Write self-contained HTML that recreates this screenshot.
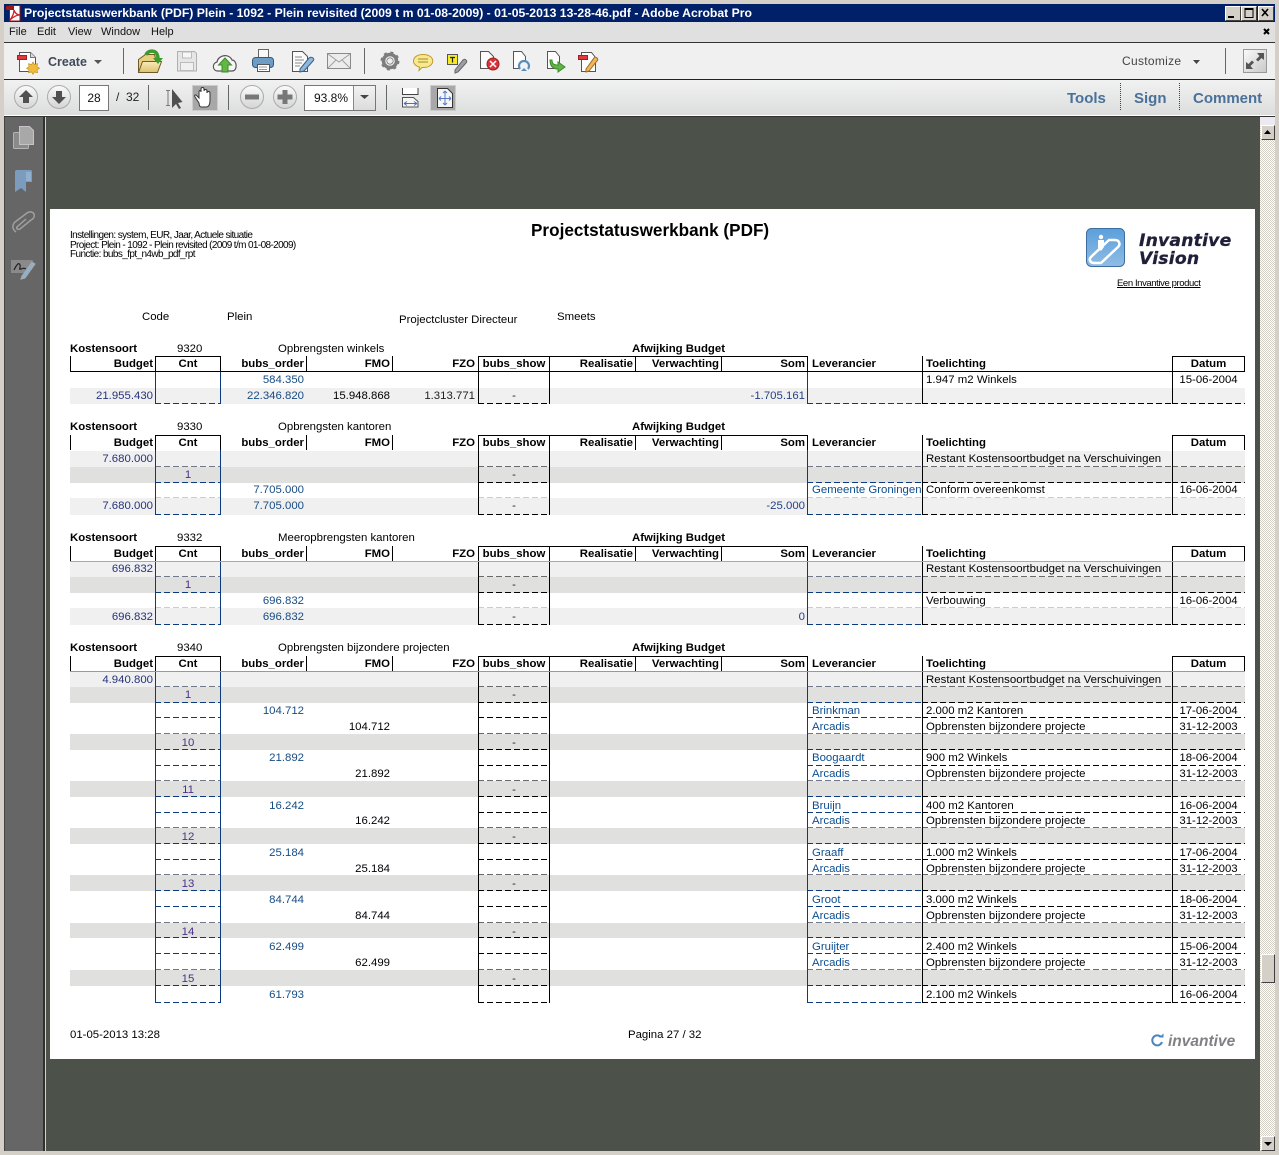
<!DOCTYPE html>
<html><head><meta charset="utf-8"><title>Projectstatuswerkbank</title>
<style>
html,body{margin:0;padding:0}
body{position:relative;width:1279px;height:1155px;overflow:hidden;background:#d4d0c8;font-family:"Liberation Sans",sans-serif;font-size:11.4px;color:#000}
div,span,b,svg,a{position:absolute}
.nw,div,span,b,a{white-space:nowrap}
#title{left:4px;top:4px;width:1271px;height:18px;background:#00206a}
#title span{left:20px;top:1px;color:#fff;font:bold 12.2px/16px "Liberation Sans",sans-serif}
.wb{top:6px;width:14px;height:13px;background:#d4d0c8;border:1px solid;border-color:#fff #404040 #404040 #fff}
#menu{left:4px;top:22px;width:1271px;height:20px;background:#e0e0e0}
#menu span{top:3px;font-size:11px;line-height:14px;color:#111}
#tb1{left:4px;top:42px;width:1271px;height:36px;background:#f0f0f1;border-top:1px solid #333;border-bottom:1px solid #222}
#tb2{left:4px;top:80px;width:1271px;height:35px;background:linear-gradient(#f1f1f2,#dcdedc);border-bottom:1px solid #fff}
#line{left:4px;top:116px;width:1271px;height:1px;background:#333}
.sep{width:1px;background:#666}
.box{background:#fff;border:1px solid #777;box-sizing:border-box;text-align:center;font-size:12px;color:#111}
.tab{top:90px;font:bold 15px/18px "Liberation Sans",sans-serif;color:#4a7199}
.dot{top:83px;height:27px;width:0;border-left:1px dotted #444}
#pane{left:4px;top:117px;width:41px;height:1034px;background:#666;border-right:2px solid #303030;box-sizing:border-box;border-left:1px solid #444}
#main{left:46px;top:117px;width:1214px;height:1034px;background:#4c5149}
#page{left:50px;top:209px;width:1205px;height:850px;background:#fff}
#sb{left:1260px;top:117px;width:15px;height:1034px;background:repeating-conic-gradient(#d4d0c8 0 25%,#fff 0 50%) 0 0/2px 2px}
.sbb{left:1px;width:12px;height:13px;background:#d4d0c8;border:1px solid;border-color:#fff #404040 #404040 #fff}
#bot{left:0;top:1151px;width:1279px;height:4px;background:#d4d0c8}
.t{line-height:14px;margin-top:1px}
.r{left:70px;width:1175px}
.L{background:#f0f0f1}.D{background:#e0e1df}
.r:after{content:"";position:absolute;left:0;right:0;bottom:0;height:1px;background:
repeating-linear-gradient(90deg,var(--a) 0 6px,transparent 6px 9px) 85px 0/66px 1px no-repeat,
repeating-linear-gradient(90deg,var(--b) 0 6px,transparent 6px 9px) 408px 0/72px 1px no-repeat,
repeating-linear-gradient(90deg,var(--a) 0 6px,transparent 6px 9px) 737px 0/115px 1px no-repeat,
repeating-linear-gradient(90deg,var(--b) 0 6px,transparent 6px 9px) 852px 0/250px 1px no-repeat,
repeating-linear-gradient(90deg,var(--b) 0 6px,transparent 6px 9px) 1102px 0/73px 1px no-repeat}
.k{--a:#0b3a7e;--b:#000}
.g{--a:#70788a;--b:#6a6a6a}
.h{--a:#ccc;--b:#ccc}
.n0{--a:transparent;--b:transparent}
.r span{top:1px;line-height:inherit}
.r .b{left:0;width:83px;text-align:right;color:#26337a}
.r .c{left:85px;width:66px;text-align:center;color:#4a3088}
.r .o{left:150px;width:84px;text-align:right;color:#164c84}
.r .f{left:240px;width:80px;text-align:right;color:#000}
.r .z{left:325px;width:80px;text-align:right;color:#222}
.r .s{left:408px;width:72px;text-align:center;color:#222}
.r .m{left:600px;width:135px;text-align:right;color:#243f84}
.r .l{left:742px;color:#0c4e90}
.r .n{left:856px;color:#000;letter-spacing:.02px}
.r .d{left:1102px;width:73px;text-align:center;color:#000}
.hd{left:70px;width:1175px;height:15px;line-height:15px;font-weight:bold}
.hd span{top:1px}
.hd .b{left:0;width:83px;text-align:right}.hd .c{left:85px;width:66px;text-align:center}
.hd .o{left:150px;width:84px;text-align:right}.hd .f{left:240px;width:80px;text-align:right}
.hd .z{left:325px;width:80px;text-align:right}.hd .s{left:408px;width:72px;text-align:center}
.hd .p{left:480px;width:83px;text-align:right}.hd .v{left:570px;width:79px;text-align:right}
.hd .m{left:600px;width:135px;text-align:right}.hd .l{left:742px}.hd .n{left:856px}
.hd .d{left:1102px;width:73px;text-align:center}
.ti{left:70px;width:1175px;height:14px;line-height:14px}
.ti span{top:1px}
.sec{left:70px;width:1175px;background:
linear-gradient(#0b3a7e,#0b3a7e) 85px 0/1px 100% no-repeat,
linear-gradient(#0b3a7e,#0b3a7e) 150px 0/1px 100% no-repeat,
linear-gradient(#000,#000) 408px 0/1px 100% no-repeat,
linear-gradient(#000,#000) 479px 0/1px 100% no-repeat,
linear-gradient(#0b3a7e,#0b3a7e) 737px 0/1px 100% no-repeat,
linear-gradient(#000,#000) 852px 0/1px 100% no-repeat,
linear-gradient(#000,#000) 1102px 0/1px 100% no-repeat}
.hb{left:70px;width:1175px;height:15px;background:
linear-gradient(#000,#000) 0 0/1px 100% no-repeat,
linear-gradient(#000,#000) 85px 0/1px 100% no-repeat,
linear-gradient(#000,#000) 150px 0/1px 100% no-repeat,
linear-gradient(#000,#000) 236px 0/1px 100% no-repeat,
linear-gradient(#000,#000) 322px 0/1px 100% no-repeat,
linear-gradient(#000,#000) 565px 0/1px 100% no-repeat,
linear-gradient(#000,#000) 651px 0/1px 100% no-repeat,
linear-gradient(#000,#000) 737px 0/1px 100% no-repeat,
linear-gradient(#000,#000) 1174px 0/1px 100% no-repeat,
linear-gradient(#000,#000) 85px 0/66px 1px no-repeat,
linear-gradient(#000,#000) 408px 0/329px 1px no-repeat,
linear-gradient(#000,#000) 1102px 0/73px 1px no-repeat}
.ln{left:70px;width:1175px;height:1px}
</style></head><body>
<div id="title"><span>Projectstatuswerkbank (PDF) Plein - 1092 - Plein revisited (2009 t m 01-08-2009) - 01-05-2013 13-28-46.pdf - Adobe Acrobat Pro</span></div>
<div class="wb" style="left:1225px"></div><div class="wb" style="left:1241px"></div><div class="wb" style="left:1258px"></div>
<div id="menu"><span style="left:5px">File</span><span style="left:33px">Edit</span><span style="left:64px">View</span><span style="left:97px">Window</span><span style="left:147px">Help</span></div>
<div id="tb1"></div><div id="tb2"></div><div id="line"></div>
<span style="left:48px;top:54px;font:bold 12.5px/16px 'Liberation Sans',sans-serif;color:#3f4a5a">Create</span>
<span style="left:1122px;top:54px;font-size:12px;line-height:15px;color:#444;letter-spacing:.3px">Customize</span>
<div class="sep" style="left:123px;top:48px;height:26px"></div>
<div class="sep" style="left:364px;top:48px;height:26px"></div>
<div class="sep" style="left:1225px;top:48px;height:26px"></div>
<div class="sep" style="left:148px;top:85px;height:25px"></div>
<div class="sep" style="left:228px;top:85px;height:25px"></div>
<div class="sep" style="left:386px;top:85px;height:25px"></div>
<div class="box" style="left:79px;top:85px;width:30px;height:26px;line-height:25px">28</div>
<span style="left:116px;top:90px;font-size:12px;line-height:15px;color:#222">/&nbsp; 32</span>
<div class="box" style="left:304px;top:85px;width:72px;height:26px;line-height:25px;text-align:left;padding-left:9px">93.8%</div>
<div style="left:353px;top:86px;width:22px;height:24px;background:linear-gradient(#f2f2f2,#dcdcdc);border-left:1px solid #888;box-sizing:border-box"></div>
<div style="left:192px;top:85px;width:26px;height:26px;background:#a8a8a8;border:1px solid #ccc;box-sizing:border-box"></div>
<div style="left:430px;top:85px;width:26px;height:26px;background:#a8a8a8;border:1px solid #ccc;box-sizing:border-box"></div>
<span class="tab" style="left:1067px">Tools</span><div class="dot" style="left:1120px"></div>
<span class="tab" style="left:1134px">Sign</span><div class="dot" style="left:1179px"></div>
<span class="tab" style="left:1193px">Comment</span>
<div id="pane"></div><div id="main"></div><div id="sb"><div style="left:0;top:0;width:15px;height:8px;background:#ece9f0"></div><div class="sbb" style="top:8px"></div><div class="sbb" style="top:837px;height:27px"></div><div class="sbb" style="top:1019px"></div></div>
<div id="bot"></div>
<svg style="left:0;top:0" width="1279" height="1155" viewBox="0 0 1279 1155">
<defs><linearGradient id="gr" x2="1" y2="1"><stop offset="0" stop-color="#fafafa"/><stop offset="1" stop-color="#c8c8c8"/></linearGradient><linearGradient id="bl" x1="0" y1="0" x2="0" y2="1"><stop offset="0" stop-color="#5c9fdb"/><stop offset="1" stop-color="#8fbce4"/></linearGradient><linearGradient id="fo" x1="0" y1="0" x2="0" y2="1"><stop offset="0" stop-color="#f8ecb8"/><stop offset="1" stop-color="#dcc070"/></linearGradient><linearGradient id="cr" x1="0" y1="0" x2="0" y2="1"><stop offset="0" stop-color="#fbfbfb"/><stop offset="1" stop-color="#d4d4d4"/></linearGradient></defs>
<path d="M1228 16h6v2h-6z" fill="#000"/><path d="M1245 8.500h8v9h-8zM1245 9.500h8" fill="none" stroke="#000"/><path d="M1262 9l6 7M1268 9l-6 7" stroke="#000" stroke-width="1.600"/>
<path d="M1264 29l5 5M1269 29l-5 5" stroke="#000" stroke-width="2"/>
<!-- pdf icon -->
<path d="M9.500 5.500h10.500v15.500h-10.500z" fill="#fff" stroke="#8c1414"/><path d="M6 6h8v4h-8z" fill="#9c1a1a"/><path d="M10 20c3-4 4-7 4-10 1 3 3 5 6 5-4 0-7 2-10 5z" fill="none" stroke="#d0202a" stroke-width="1.300"/>
<!-- create -->
<path d="M19.500 52.500h11l5 5v14h-16z" fill="#fff" stroke="#555"/><path d="M30.500 52.500v5h5" fill="#ddd" stroke="#777"/><rect x="17.500" y="55.500" width="9" height="4" fill="#e0383c" stroke="#a02020"/><path d="M33 62l1.500 2.500 3-.800-.500 3 2.500 1.500-2.500 1.500.500 3-3-.800-1.500 2.500-1.500-2.500-3 .800.500-3-2.500-1.500 2.500-1.500-.500-3 3 .800z" fill="#f0bd3a" stroke="#b98a1c" stroke-width=".600"/>
<path d="M94 60h8l-4 4z" fill="#555"/>
<!-- open -->
<path d="M138.500 59.500l7-5h9l1 4v13h-17z" fill="#e8d080" stroke="#6d5c28"/><path d="M138.500 72.500l4-11h19l-4 11z" fill="url(#fo)" stroke="#6d5c28"/><path d="M146 55c2-5 9-5 11-1 1 2 1 3 1 5" fill="none" stroke="#3f9a2e" stroke-width="3.500"/><path d="M153 58h10l-5 6z" fill="#3f9a2e"/>
<!-- save -->
<path d="M177.500 51.500h17l2 2v17.500h-19z" fill="#e6e6e6" stroke="#b0b0b0"/><rect x="182.500" y="52" width="9" height="6" fill="#f6f6f6" stroke="#bbb"/><rect x="180.500" y="62.500" width="13" height="8" fill="#f0f0f0" stroke="#bbb"/>
<!-- cloud -->
<path d="M218 71c-6 0-6-8-1-9 1-7 12-9 15-2 5 0 6 11 0 11z" fill="#f6f6f6" stroke="#555" stroke-width="1.200"/><path d="M225 58l-6.500 7h3.500v7h6v-7h3.500z" fill="#62b745" stroke="#3c8a2c"/>
<!-- print -->
<rect x="258.500" y="49.500" width="10" height="8" fill="#f8f8f8" stroke="#666"/><rect x="252.500" y="57.500" width="21" height="10" rx="3" fill="#6d9cc4" stroke="#34587a"/><rect x="257.500" y="64.500" width="12" height="7" fill="#fff" stroke="#555"/><path d="M259 67h8M259 69.500h8" stroke="#999"/>
<!-- edit doc -->
<path d="M292.500 51.500h10l5 5v15h-15z" fill="#fbfbfb" stroke="#555"/><path d="M295 57h7M295 60h9M295 63h7M295 66h5" stroke="#888"/><path d="M300 69l9-11c1-1 3-1 4 0s1 2 0 3l-9 10-4 1z" fill="#8fb8dc" stroke="#3a5f85"/>
<!-- mail -->
<rect x="327.500" y="53.500" width="23" height="15" fill="#ececec" stroke="#8a8a8a"/><path d="M328 54l11 8 11-8M328 68l8-8M350 68l-8-8" fill="none" stroke="#a0a0a0"/>
<!-- gear -->
<circle cx="390" cy="61" r="6.500" fill="none" stroke="#7d7d7d" stroke-width="3.500"/><circle cx="390" cy="61" r="8.500" fill="none" stroke="#7d7d7d" stroke-width="2" stroke-dasharray="3 3.700"/><circle cx="390" cy="61" r="3.200" fill="#eee" stroke="#555" stroke-width=".600"/>
<!-- comment -->
<path d="M423 54.500c13 0 13 13 0 13h-1l-3 3 .500-3.500c-9-2-8-12.500 3.500-12.500z" fill="#f8e98c" stroke="#c09a30"/><path d="M418 59h10M418 62h10" stroke="#a08a30"/>
<!-- note -->
<rect x="447.500" y="54.500" width="10" height="10" fill="#f6ea20" stroke="#555"/><path d="M450 57.500h5M452.500 57.500v5" stroke="#222" stroke-width="1.200"/><path d="M455 70l8-10c1-1 2-1 3 0s1 2 0 3l-8 9-3 1z" fill="#9a9ea4" stroke="#666"/>
<!-- doc x -->
<path d="M480.500 51.500h8l5 5v12h-13z" fill="#fdfdfd" stroke="#555"/><circle cx="493" cy="64" r="6" fill="#d8333a" stroke="#a02020"/><path d="M490 61l6 6M496 61l-6 6" stroke="#fff" stroke-width="1.500"/>
<!-- doc rotate -->
<path d="M513.500 51.500h8l4 5v12h-12z" fill="#fdfdfd" stroke="#555"/><path d="M520 69a5 5 0 1 1 8 0" fill="#eef3f8" stroke="#5c8db8" stroke-width="2.200"/><path d="M521 71h6l-3 -3z" fill="#5c8db8"/>
<!-- doc arrow -->
<path d="M547.500 51.500h8l4 5v12h-12z" fill="#fdfdfd" stroke="#555"/><path d="M552 60c0 4 2 5 6 5v-3l7 5-7 5v-3c-5 0-8-3-8-9z" fill="#63b247" stroke="#3c8a2c"/>
<!-- doc pencil -->
<path d="M581.500 52.500h10l4 5v14h-14z" fill="#fdfdfd" stroke="#555"/><rect x="578.500" y="55.500" width="9" height="4" fill="#e0383c" stroke="#a02020"/><path d="M586 69l8-11c1-1 2-1 3 0s1 2 0 3l-8 10-3 1z" fill="#f2b65a" stroke="#a06a20"/>
<!-- right -->
<path d="M1193 60h7l-3.500 4z" fill="#444"/>
<rect x="1243.500" y="49.500" width="23" height="23" fill="url(#gr)" stroke="#999"/>
<path d="M1257 53h7v7l-2.500-2-3.500 3.500-2-2 3.500-3.500zM1253 69h-7v-7l2.500 2 3.500-3.500 2 2-3.500 3.500z" fill="#555"/>
<!-- nav -->
<g stroke="#aaa" fill="url(#cr)"><circle cx="26" cy="97" r="11.500"/><circle cx="59" cy="97" r="11.500"/><circle cx="252" cy="97" r="11.500"/><circle cx="285" cy="97" r="11.500"/></g>
<path d="M26 90l-7 7h4v6h6v-6h4z" fill="#505050"/><path d="M59 104l-7-7h4v-6h6v6h4z" fill="#505050"/>
<rect x="245" y="94.500" width="14" height="5" fill="#777"/><path d="M282.500 90h5v4.500h5v5h-5v4.500h-5v-4.500h-5v-5h5z" fill="#777"/>
<path d="M360 95h9l-4.500 4z" fill="#444"/>
<!-- select -->
<path d="M166 90.500h4M166 105.500h4M168 90.500v15" stroke="#777" fill="none"/><path d="M172 89v19l4-4 3 5 2-1-3-5 4.500-1z" fill="#505050"/>
<!-- hand -->
<path d="M199 103l-4-6c-1-2 1-3 2-1l2 2v-6c0-2 2-2 2 0v-3c0-2 3-2 3 0v2c0-2 3-2 3 0v2c0-2 3-2 3 0v7c0 4-1 7-4 7h-5c-1 0-2-2-2-4z" fill="#fff" stroke="#333"/>
<!-- fit width -->
<path d="M402.500 88v6.500h15.500v-6.500" fill="#fff" stroke="#444"/><path d="M402.500 97.500h11l4.500 4v5.500h-15.500z" fill="#f6f6f6" stroke="#555"/><path d="M404 103.500h13M404 103.500l3-2M404 103.500l3 2M417 103.500l-3-2M417 103.500l-3 2" stroke="#4a6fc0"/>
<!-- fit page -->
<path d="M437.500 88.500h10l5 5v14h-15z" fill="#f6f6f6" stroke="#333"/><path d="M445 91v14M439 98.500h12M445 91l-2 2M445 91l2 2M445 105l-2-2M445 105l2-2M439 98.500l2-2M439 98.500l2 2M451 98.500l-2-2M451 98.500l-2 2" stroke="#5a78c8" fill="none"/>
<!-- scrollbar arrows -->
<path d="M1264 134h7l-3.500-4z" fill="#000"/><path d="M1264 1142h8l-4 4z" fill="#000"/>
<!-- pane -->
<rect x="13.500" y="132.500" width="15" height="16" rx="1" fill="#8a8a8a" stroke="#b4b4b4"/><path d="M19.500 126.500h10l4 4v14h-14z" fill="#a8a8a8" stroke="#c4c4c4"/>
<path d="M15 172c0-2 1-2 2-2h13c2 0 2 1 2 2v10h-6v10l-5-4-6 4z" fill="#7b9cbc"/><path d="M26 172h5v9h-5z" fill="#8fb0cf"/>
<path d="M16 232c-4-3-4-7-1-10l12-9c3-2 6-1 7 1 1 3-1 5-3 6l-11 9c-2 1-4 0-3-2l9-8" fill="none" stroke="#a0a0a0" stroke-width="1.500"/>
<path d="M11 260h22l-4 13H11z" fill="#8a8a8a"/><path d="M14 270c3-6 5-8 6-5s-2 5 1 4 3-1 5 0" fill="none" stroke="#222" stroke-width="1.200"/><path d="M22 276l10-14 3 2-10 14-4 1z" fill="#8db0d0" stroke="#aaa"/>
</svg>
<div id="page"></div>
<div class="nw" style="left:70px;top:231px;font-size:10px;line-height:10px;letter-spacing:-.6px">Instellingen: system, EUR, Jaar, Actuele situatie</div>
<div class="nw" style="left:70px;top:241px;font-size:10px;line-height:10px;letter-spacing:-.62px">Project: Plein - 1092 - Plein revisited (2009 t/m 01-08-2009)</div>
<div class="nw" style="left:70px;top:250px;font-size:10px;line-height:10px;letter-spacing:-.6px">Functie: bubs_fpt_n4wb_pdf_rpt</div>
<div class="nw" style="left:531px;top:221px;font:bold 17.15px/18px 'Liberation Sans',sans-serif">Projectstatuswerkbank (PDF)</div>
<svg style="left:1086px;top:228px" width="40" height="41" viewBox="0 0 40 41"><rect x=".5" y=".5" width="38" height="38" rx="5" fill="url(#bl)" stroke="#3c6fa0"/><path d="M5 29c-3 3 0 6 3 6h7L32 19c3-3 1-7-3-7h-6L7 27z" fill="none" stroke="#fff" stroke-width="2.500"/><circle cx="15" cy="9" r="2.200" fill="#fff"/><path d="M12 12h6v7l-3 4-3-3z" fill="#fff"/></svg>
<div class="nw" style="left:1139px;top:231px;font:italic bold 17.2px/20px 'DejaVu Sans',sans-serif;color:#1f1f38;letter-spacing:.2px;-webkit-text-stroke:.3px #1f1f38">Invantive</div>
<div class="nw" style="left:1139px;top:249px;font:italic bold 17.2px/20px 'DejaVu Sans',sans-serif;color:#1f1f38;letter-spacing:.2px;-webkit-text-stroke:.3px #1f1f38">Vision</div>
<div class="nw" style="left:1117px;top:279px;font-size:9.500px;line-height:10px;letter-spacing:-.4px;text-decoration:underline">Een Invantive product</div>
<div class="t" style="left:142px;top:309px">Code</div>
<div class="t" style="left:227px;top:309px">Plein</div>
<div class="t" style="left:399px;top:312px">Projectcluster Directeur</div>
<div class="t" style="left:557px;top:309px">Smeets</div>

<!-- 9320 -->
<div class="ti" style="top:341px"><span style="left:0;font-weight:bold">Kostensoort</span><span style="left:107px">9320</span><span style="left:208px">Opbrengsten winkels</span><span style="left:562px;font-weight:bold">Afwijking Budget</span></div>
<div class="r n0" style="top:372px;height:16px;line-height:15px"><span class="o">584.350</span><span class="n">1.947 m2 Winkels</span><span class="d">15-06-2004</span></div>
<div class="r L k" style="top:388px;height:16px;line-height:15px"><span class="b">21.955.430</span><span class="o">22.346.820</span><span class="f">15.948.868</span><span class="z">1.313.771</span><span class="s">-</span><span class="m">-1.705.161</span></div>
<div class="sec" style="top:356px;height:48px"></div>
<div class="hb" style="top:356px"></div><div class="ln" style="top:371px;background:#000"></div>
<div class="hd" style="top:356px"><span class="b">Budget</span><span class="c">Cnt</span><span class="o">bubs_order</span><span class="f">FMO</span><span class="z">FZO</span><span class="s">bubs_show</span><span class="p">Realisatie</span><span class="v">Verwachting</span><span class="m">Som</span><span class="l">Leverancier</span><span class="n">Toelichting</span><span class="d">Datum</span></div>

<!-- 9330 -->
<div class="ti" style="top:419px"><span style="left:0;font-weight:bold">Kostensoort</span><span style="left:107px">9330</span><span style="left:208px">Opbrengsten kantoren</span><span style="left:562px;font-weight:bold">Afwijking Budget</span></div>
<div class="r L g" style="top:451px;height:16px;line-height:15px"><span class="b">7.680.000</span><span class="n">Restant Kostensoortbudget na Verschuivingen</span></div>
<div class="r D k" style="top:467px;height:16px;line-height:15px"><span class="c">1</span><span class="s">-</span></div>
<div class="r h" style="top:483px;height:15px;line-height:13px"><span class="o">7.705.000</span><span class="l">Gemeente Groningen</span><span class="n">Conform overeenkomst</span><span class="d">16-06-2004</span></div>
<div class="r L k" style="top:498px;height:17px;line-height:15px"><span class="b">7.680.000</span><span class="o">7.705.000</span><span class="s">-</span><span class="m">-25.000</span></div>
<div class="sec" style="top:435px;height:80px"></div>
<div class="hb" style="top:435px"></div>
<div class="hd" style="top:435px"><span class="b">Budget</span><span class="c">Cnt</span><span class="o">bubs_order</span><span class="f">FMO</span><span class="z">FZO</span><span class="s">bubs_show</span><span class="p">Realisatie</span><span class="v">Verwachting</span><span class="m">Som</span><span class="l">Leverancier</span><span class="n">Toelichting</span><span class="d">Datum</span></div>

<!-- 9332 -->
<div class="ti" style="top:530px"><span style="left:0;font-weight:bold">Kostensoort</span><span style="left:107px">9332</span><span style="left:208px">Meeropbrengsten kantoren</span><span style="left:562px;font-weight:bold">Afwijking Budget</span></div>
<div class="r L g" style="top:561px;height:16px;line-height:15px"><span class="b">696.832</span><span class="n">Restant Kostensoortbudget na Verschuivingen</span></div>
<div class="r D k" style="top:577px;height:16px;line-height:15px"><span class="c">1</span><span class="s">-</span></div>
<div class="r h" style="top:593px;height:15px;line-height:14px"><span class="o">696.832</span><span class="n">Verbouwing</span><span class="d">16-06-2004</span></div>
<div class="r L k" style="top:608px;height:17px;line-height:16px"><span class="b">696.832</span><span class="o">696.832</span><span class="s">-</span><span class="m">0</span></div>
<div class="sec" style="top:546px;height:79px"></div>
<div class="hb" style="top:546px"></div><div class="ln" style="top:561px;background:#aaa"></div>
<div class="hd" style="top:546px"><span class="b">Budget</span><span class="c">Cnt</span><span class="o">bubs_order</span><span class="f">FMO</span><span class="z">FZO</span><span class="s">bubs_show</span><span class="p">Realisatie</span><span class="v">Verwachting</span><span class="m">Som</span><span class="l">Leverancier</span><span class="n">Toelichting</span><span class="d">Datum</span></div>

<!-- 9340 -->
<div class="ti" style="top:640px"><span style="left:0;font-weight:bold">Kostensoort</span><span style="left:107px">9340</span><span style="left:208px">Opbrengsten bijzondere projecten</span><span style="left:562px;font-weight:bold">Afwijking Budget</span></div>
<div class="r L g" style="top:672px;height:15px;line-height:15px"><span class="b">4.940.800</span><span class="n">Restant Kostensoortbudget na Verschuivingen</span></div>
<div class="r D k" style="top:687px;height:16px;line-height:15px"><span class="c">1</span><span class="s">-</span></div>
<div class="r k" style="top:703px;height:15px;line-height:15px"><span class="o">104.712</span><span class="l">Brinkman</span><span class="n">2.000 m2 Kantoren</span><span class="d">17-06-2004</span></div>
<div class="r g" style="top:718px;height:16px;line-height:16px"><span class="f">104.712</span><span class="l">Arcadis</span><span class="n">Opbrensten bijzondere projecte</span><span class="d">31-12-2003</span></div>
<div class="r D k" style="top:734px;height:16px;line-height:16px"><span class="c">10</span><span class="s">-</span></div>
<div class="r k" style="top:750px;height:16px;line-height:15px"><span class="o">21.892</span><span class="l">Boogaardt</span><span class="n">900 m2 Winkels</span><span class="d">18-06-2004</span></div>
<div class="r g" style="top:766px;height:15px;line-height:15px"><span class="f">21.892</span><span class="l">Arcadis</span><span class="n">Opbrensten bijzondere projecte</span><span class="d">31-12-2003</span></div>
<div class="r D k" style="top:781px;height:16px;line-height:16px"><span class="c">11</span><span class="s">-</span></div>
<div class="r k" style="top:797px;height:16px;line-height:16px"><span class="o">16.242</span><span class="l">Bruijn</span><span class="n">400 m2 Kantoren</span><span class="d">16-06-2004</span></div>
<div class="r g" style="top:813px;height:15px;line-height:15px"><span class="f">16.242</span><span class="l">Arcadis</span><span class="n">Opbrensten bijzondere projecte</span><span class="d">31-12-2003</span></div>
<div class="r D k" style="top:828px;height:16px;line-height:16px"><span class="c">12</span><span class="s">-</span></div>
<div class="r k" style="top:844px;height:16px;line-height:16px"><span class="o">25.184</span><span class="l">Graaff</span><span class="n">1.000 m2 Winkels</span><span class="d">17-06-2004</span></div>
<div class="r g" style="top:860px;height:15px;line-height:16px"><span class="f">25.184</span><span class="l">Arcadis</span><span class="n">Opbrensten bijzondere projecte</span><span class="d">31-12-2003</span></div>
<div class="r D k" style="top:875px;height:16px;line-height:16px"><span class="c">13</span><span class="s">-</span></div>
<div class="r k" style="top:891px;height:16px;line-height:16px"><span class="o">84.744</span><span class="l">Groot</span><span class="n">3.000 m2 Winkels</span><span class="d">18-06-2004</span></div>
<div class="r g" style="top:907px;height:16px;line-height:16px"><span class="f">84.744</span><span class="l">Arcadis</span><span class="n">Opbrensten bijzondere projecte</span><span class="d">31-12-2003</span></div>
<div class="r D k" style="top:923px;height:15px;line-height:16px"><span class="c">14</span><span class="s">-</span></div>
<div class="r k" style="top:938px;height:16px;line-height:16px"><span class="o">62.499</span><span class="l">Gruijter</span><span class="n">2.400 m2 Winkels</span><span class="d">15-06-2004</span></div>
<div class="r g" style="top:954px;height:16px;line-height:16px"><span class="f">62.499</span><span class="l">Arcadis</span><span class="n">Opbrensten bijzondere projecte</span><span class="d">31-12-2003</span></div>
<div class="r D k" style="top:970px;height:16px;line-height:16px"><span class="c">15</span><span class="s">-</span></div>
<div class="r k" style="top:986px;height:17px;line-height:16px"><span class="o">61.793</span><span class="n">2.100 m2 Winkels</span><span class="d">16-06-2004</span></div>
<div class="sec" style="top:656px;height:347px"></div>
<div class="hb" style="top:656px"></div><div class="ln" style="top:671px;background:#999"></div>
<div class="hd" style="top:656px"><span class="b">Budget</span><span class="c">Cnt</span><span class="o">bubs_order</span><span class="f">FMO</span><span class="z">FZO</span><span class="s">bubs_show</span><span class="p">Realisatie</span><span class="v">Verwachting</span><span class="m">Som</span><span class="l">Leverancier</span><span class="n">Toelichting</span><span class="d">Datum</span></div>

<div class="t" style="left:70px;top:1027px">01-05-2013 13:28</div>
<div class="t" style="left:628px;top:1027px">Pagina 27 / 32</div>
<svg style="left:1150px;top:1033px" width="16" height="15" viewBox="0 0 16 15"><path d="M11 4a5 5 0 1 0 1 5" fill="none" stroke="#4a85bf" stroke-width="2"/><path d="M9 4.500h4.500V.500z" fill="#4a85bf"/></svg>
<div class="nw" style="left:1168px;top:1033px;font:italic bold 15.500px/18px 'Liberation Sans',sans-serif;color:#7f8184">invantive</div>
</body></html>
